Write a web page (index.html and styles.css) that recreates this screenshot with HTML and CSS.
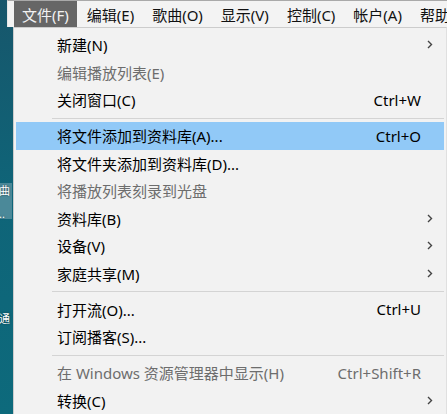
FILE: index.html
```html
<!DOCTYPE html>
<html lang="zh-CN">
<head>
  <meta charset="UTF-8">
  <title>iTunes - 文件</title>
  <link rel="stylesheet" href="styles.css">
</head>
<body>
  <div class="desktop">
    <div class="desk-icon selected">
      <span class="desk-label">曲</span>
      <span class="desk-label">..</span>
    </div>
    <div class="desk-icon lower">
      <span class="desk-label">通</span>
    </div>
  </div>

  <div class="app">
    <nav class="menubar">
      <span class="menubar-item open">文件(F)</span>
      <span class="menubar-item">编辑(E)</span>
      <span class="menubar-item">歌曲(O)</span>
      <span class="menubar-item">显示(V)</span>
      <span class="menubar-item">控制(C)</span>
      <span class="menubar-item">帐户(A)</span>
      <span class="menubar-item">帮助</span>
    </nav>

    <ul class="dropdown">
      <li class="item"><span class="label">新建(N)</span><span class="key"></span><span class="arrow"><svg width="6" height="9" viewBox="0 0 6 9"><polyline points="1,1 4.5,4.5 1,8"/></svg></span></li>
      <li class="item disabled"><span class="label">编辑播放列表(E)</span><span class="key"></span><span class="arrow"></span></li>
      <li class="item"><span class="label">关闭窗口(C)</span><span class="key">Ctrl+W</span><span class="arrow"></span></li>
      <li class="separator"></li>
      <li class="item active"><span class="label">将文件添加到资料库(A)...</span><span class="key">Ctrl+O</span><span class="arrow"></span></li>
      <li class="item"><span class="label">将文件夹添加到资料库(D)...</span><span class="key"></span><span class="arrow"></span></li>
      <li class="item disabled"><span class="label">将播放列表刻录到光盘</span><span class="key"></span><span class="arrow"></span></li>
      <li class="item"><span class="label">资料库(B)</span><span class="key"></span><span class="arrow"><svg width="6" height="9" viewBox="0 0 6 9"><polyline points="1,1 4.5,4.5 1,8"/></svg></span></li>
      <li class="item"><span class="label">设备(V)</span><span class="key"></span><span class="arrow"><svg width="6" height="9" viewBox="0 0 6 9"><polyline points="1,1 4.5,4.5 1,8"/></svg></span></li>
      <li class="item"><span class="label">家庭共享(M)</span><span class="key"></span><span class="arrow"><svg width="6" height="9" viewBox="0 0 6 9"><polyline points="1,1 4.5,4.5 1,8"/></svg></span></li>
      <li class="separator"></li>
      <li class="item"><span class="label">打开流(O)...</span><span class="key">Ctrl+U</span><span class="arrow"></span></li>
      <li class="item"><span class="label">订阅播客(S)...</span><span class="key"></span><span class="arrow"></span></li>
      <li class="separator"></li>
      <li class="item disabled"><span class="label">在 Windows 资源管理器中显示(H)</span><span class="key">Ctrl+Shift+R</span><span class="arrow"></span></li>
      <li class="item"><span class="label">转换(C)</span><span class="key"></span><span class="arrow"><svg width="6" height="9" viewBox="0 0 6 9"><polyline points="1,1 4.5,4.5 1,8"/></svg></span></li>
    </ul>
  </div>
</body>
</html>
```

FILE: styles.css
```css
* {
  margin: 0;
  padding: 0;
  box-sizing: border-box;
}

body {
  width: 447px;
  height: 414px;
  overflow: hidden;
  position: relative;
  font-family: 'Noto Sans', 'Noto Sans CJK SC', sans-serif;
  font-size: 15px;
  color: #000;
  background: linear-gradient(180deg, #17566b 0%, #0f6478 45%, #0d6a7c 100%);
}

/* desktop icons peeking out on the left */
.desktop {
  position: absolute;
  left: 0;
  top: 0;
  width: 13px;
  height: 414px;
}

.desk-icon {
  position: absolute;
  left: 0;
  width: 12px;
  display: flex;
  flex-direction: column;
  gap: 11px;
  font-size: 11px;
  line-height: 12px;
  color: #fff;
}

.desk-icon.selected {
  top: 183px;
  height: 36px;
  padding-top: 2px;
  background: rgba(190, 205, 215, 0.35);
}

.desk-icon.lower {
  top: 313px;
}

.desk-label {
  margin-left: -1px;
  text-shadow: 0 0 2px rgba(0, 0, 0, 0.6);
}

.app {
  position: relative;
  margin-left: 7px;
}

.menubar {
  display: flex;
  height: 27px;
  padding-left: 6px;
  background: #f3f3f3;
  border-top: 1px solid #a9a9a9;
  border-left: 1px solid #e6e6e6;
  white-space: nowrap;
  overflow: hidden;
}

.menubar-item {
  display: flex;
  align-items: center;
  padding: 0 8px;
  height: 26px;
  margin-right: 2px;
  color: #111;
}

.menubar-item.open {
  background: #666;
  color: #f2f2f2;
}

.dropdown {
  list-style: none;
  margin-left: 6px;
  width: 434px;
  padding: 3px 2px 2px;
  background: #f2f2f2;
  border: 1px solid #ccc;
  border-right-color: #e0e0e0;
}

.item {
  display: grid;
  grid-template-columns: 1fr auto 23px;
  align-items: center;
  height: 27.5px;
  padding-left: 41px;
  white-space: nowrap;
}

.item.active {
  background: #91c9f7;
}

.item.disabled {
  color: #6d6d6d;
}

.key {
  text-align: right;
}

.arrow {
  display: flex;
  justify-content: center;
  padding-right: 6px;
}

.arrow polyline {
  fill: none;
  stroke: #444;
  stroke-width: 1.4;
}

.separator {
  height: 8.5px;
  margin-left: 36px;
  padding-top: 4px;
}

.separator::after {
  content: '';
  display: block;
  height: 1px;
  background: #d4d4d4;
}
```
